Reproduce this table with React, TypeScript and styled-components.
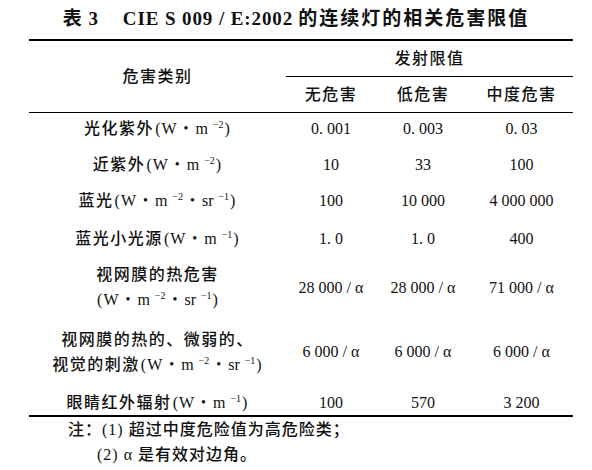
import React from 'react'
import styled, { createGlobalStyle } from 'styled-components'

const GlobalStyle = createGlobalStyle`
  html, body {
    margin: 0;
    padding: 0;
    background: #fff;
  }
  body {
    color: #111;
    font-family: "Liberation Serif", "Noto Sans CJK SC", serif;
  }
`

const Page = styled.div`
  width: 592px;
  height: 470px;
  overflow: hidden;
  background: #fff;
`

const Title = styled.h1`
  margin: 0;
  height: 38px;
  line-height: 38px;
  font-size: 19px;
  font-weight: 700;
  letter-spacing: 0.9px;
  text-align: center;
  white-space: nowrap;
`

const TableNo = styled.span`
  margin-right: 24px;
`

const TitleText = styled.span`
  letter-spacing: 2px;
  margin-left: 5px;
`

const Table = styled.div`
  margin: 1px 0 0 29px;
  width: 544px;
  display: grid;
  grid-template-columns: 257px 90px 94px 103px;
  grid-template-rows: 36px 36px 31px 40px 32px 44px 54px 75px 26px;
  border-top: 2px solid #000;
  border-bottom: 2px solid #000;
`

const Cell = styled.div<{ $cols?: number; $rows?: number; $ruled?: boolean; $head?: boolean }>`
  display: flex;
  flex-direction: column;
  align-items: center;
  justify-content: center;
  text-align: center;
  grid-column: span ${({ $cols }) => $cols ?? 1};
  grid-row: span ${({ $rows }) => $rows ?? 1};
  border-bottom: ${({ $ruled }) => ($ruled ? '1px solid #000' : 'none')};
  font-size: 16px;
  font-weight: ${({ $head }) => ($head ? 500 : 400)};
  line-height: 25px;
  letter-spacing: ${({ $head }) => ($head ? '1.5px' : '0')};
  white-space: nowrap;
`

const Line = styled.div`
  white-space: nowrap;
`

const Label = styled.span`
  font-weight: 500;
  letter-spacing: 1.5px;
`

const Sup = styled.sup`
  font-size: 10px;
  line-height: 0;
  vertical-align: 0.6em;
  margin-left: 5px;
  letter-spacing: 0;
`

const Dot = styled.span`
  font-size: 14px;
  margin: 0 7px;
  vertical-align: 1px;
`

const Paren = styled.span`
  margin: 0 1px;
`

const Notes = styled.div`
  padding-left: 68px;
  font-size: 16px;
  font-weight: 500;
  line-height: 25px;
  letter-spacing: 1px;
  white-space: nowrap;
`

const NoteLine = styled.div<{ $indent?: number }>`
  padding-left: ${({ $indent }) => $indent ?? 0}px;
`

const Unit: React.FC<{ m: string; sr?: boolean }> = ({ m, sr }) => (
  <span>
    <Paren>(</Paren>W<Dot>•</Dot>m<Sup>−{m}</Sup>
    {sr && (
      <>
        <Dot>•</Dot>sr<Sup>−1</Sup>
      </>
    )}
    <Paren>)</Paren>
  </span>
)

interface Row {
  lines: React.ReactNode[]
  values: string[]
}

const rows: Row[] = [
  { lines: [<><Label>光化紫外</Label><Unit m="2" /></>], values: ['0. 001', '0. 003', '0. 03'] },
  { lines: [<><Label>近紫外</Label><Unit m="2" /></>], values: ['10', '33', '100'] },
  { lines: [<><Label>蓝光</Label><Unit m="2" sr /></>], values: ['100', '10 000', '4 000 000'] },
  { lines: [<><Label>蓝光小光源</Label><Unit m="1" /></>], values: ['1. 0', '1. 0', '400'] },
  {
    lines: [<Label>视网膜的热危害</Label>, <Unit m="2" sr />],
    values: ['28 000 / α', '28 000 / α', '71 000 / α'],
  },
  {
    lines: [<Label>视网膜的热的、微弱的、</Label>, <><Label>视觉的刺激</Label><Unit m="2" sr /></>],
    values: ['6 000 / α', '6 000 / α', '6 000 / α'],
  },
  { lines: [<><Label>眼睛红外辐射</Label><Unit m="1" /></>], values: ['100', '570', '3 200'] },
]

const App: React.FC = () => (
  <Page>
    <GlobalStyle />
    <Title>
      <TableNo>表 3</TableNo>CIE S 009 / E:2002<TitleText>的连续灯的相关危害限值</TitleText>
    </Title>
    <Table>
      <Cell $rows={2} $ruled $head>危害类别</Cell>
      <Cell $cols={3} $ruled $head>发射限值</Cell>
      <Cell $ruled $head>无危害</Cell>
      <Cell $ruled $head>低危害</Cell>
      <Cell $ruled $head>中度危害</Cell>
      {rows.map((row, i) => (
        <React.Fragment key={i}>
          <Cell>
            {row.lines.map((l, k) => (
              <Line key={k}>{l}</Line>
            ))}
          </Cell>
          {row.values.map((v, j) => (
            <Cell key={j}>{v}</Cell>
          ))}
        </React.Fragment>
      ))}
    </Table>
    <Notes>
      <NoteLine>注：(1) 超过中度危险值为高危险类；</NoteLine>
      <NoteLine $indent={29}>(2) α 是有效对边角。</NoteLine>
    </Notes>
  </Page>
)

export default App
